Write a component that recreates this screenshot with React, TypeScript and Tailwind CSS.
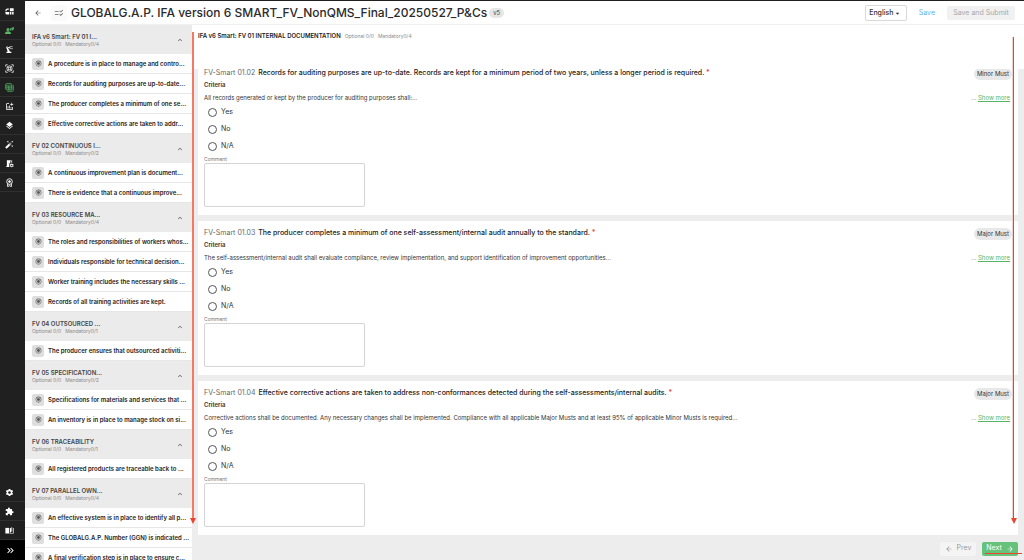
import { useState } from "react";
import clsx from "clsx";
import type { IconType } from "react-icons";
import {
  MdArrowBack,
  MdArrowDropDown,
  MdArrowForward,
  MdAutoFixHigh,
  MdChecklistRtl,
  MdExtension,
  MdKeyboardArrowUp,
  MdKeyboardDoubleArrowRight,
  MdLayers,
  MdOutlineAddchart,
  MdPrecisionManufacturing,
  MdRadioButtonChecked,
  MdRoomPreferences,
  MdSettings,
} from "react-icons/md";

function BlocksIcon({ className }: { className?: string }) {
  return (
    <svg viewBox="0 0 24 24" fill="currentColor" className={className}>
      <path d="M13 3h10v8H13zM13 13h4v7h-4zM19 13h4v7h-4z" />
      <path d="M10 3v4H7a3 3 0 0 0-3 3v1H1v-1a6 6 0 0 1 6-6h3zM1 13h10v7H5a4 4 0 0 1-4-4z" />
    </svg>
  );
}

function PeopleIcon({ className }: { className?: string }) {
  return (
    <svg viewBox="0 0 24 24" fill="currentColor" className={className}>
      <circle cx="8" cy="9" r="4" />
      <path d="M0 20c0-4 4-6 8-6s8 2 8 6v1H0zM14 5v8c2 0 3-1 4-3V5zM19 3h5c0 5-1 8-5 9z" />
    </svg>
  );
}

function ScanIcon({ className }: { className?: string }) {
  return (
    <svg
      viewBox="0 0 24 24"
      fill="none"
      stroke="currentColor"
      strokeWidth="2"
      className={className}
    >
      <path d="M2 7V2h5M17 2h5v5M22 17v5h-5M7 22H2v-5" />
      <circle cx="12" cy="12" r="7" />
      <circle cx="12" cy="12" r="3" />
      <path d="M6 8l4 2M14 14l4 2M14 10l3-3M10 14l-3 3" />
    </svg>
  );
}

function SheetsIcon({ className }: { className?: string }) {
  return (
    <svg
      viewBox="0 0 24 24"
      fill="none"
      stroke="currentColor"
      strokeWidth="2.2"
      className={className}
    >
      <rect x="2" y="2" width="16" height="16" rx="2" />
      <path d="M2 8h16M2 13h16M10 8v10M22 6v14a2 2 0 0 1-2 2H6" />
    </svg>
  );
}

function RosetteIcon({ className }: { className?: string }) {
  return (
    <svg
      viewBox="0 0 24 24"
      fill="none"
      stroke="currentColor"
      strokeWidth="2.4"
      className={className}
    >
      <circle cx="12" cy="9.500" r="7.500" />
      <circle cx="12" cy="9.500" r="2.500" fill="currentColor" />
      <path d="M7 15v8l5-2.500 5 2.500v-8" />
    </svg>
  );
}

function BookIcon({ className }: { className?: string }) {
  return (
    <svg viewBox="0 0 24 24" fill="currentColor" className={className}>
      <path d="M1 5h10v15H1z" />
      <path d="M13 6l3-1v11l-3 3zM17 4l2-2v12l-2 2zM21 5h2v15H12v-1.500h9z" />
    </svg>
  );
}

type RailItem = {
  label: string;
  icon: IconType | typeof BlocksIcon;
  active?: boolean;
};

const railTop: RailItem[] = [
  { label: "Dashboard", icon: BlocksIcon },
  { label: "Producers", icon: PeopleIcon, active: true },
  { label: "Production", icon: MdPrecisionManufacturing },
  { label: "Inspections", icon: ScanIcon },
  { label: "Checklists", icon: SheetsIcon, active: true },
  { label: "Reports", icon: MdOutlineAddchart },
  { label: "Layers", icon: MdLayers },
  { label: "Tools", icon: MdAutoFixHigh },
  { label: "Facilities", icon: MdRoomPreferences },
  { label: "Certificates", icon: RosetteIcon },
];

const railBottom: RailItem[] = [
  { label: "Settings", icon: MdSettings },
  { label: "Extensions", icon: MdExtension },
  { label: "Guides", icon: BookIcon },
];

const sections = [
  {
    title: "IFA v6 Smart: FV 01 I...",
    mandatory: 4,
    items: [
      "A procedure is in place to manage and contro...",
      "Records for auditing purposes are up-to-date...",
      "The producer completes a minimum of one se...",
      "Effective corrective actions are taken to addr...",
    ],
  },
  {
    title: "FV 02 CONTINUOUS I...",
    mandatory: 2,
    items: [
      "A continuous improvement plan is document...",
      "There is evidence that a continuous improve...",
    ],
  },
  {
    title: "FV 03 RESOURCE MA...",
    mandatory: 4,
    items: [
      "The roles and responsibilities of workers whos...",
      "Individuals responsible for technical decision...",
      "Worker training includes the necessary skills ...",
      "Records of all training activities are kept.",
    ],
  },
  {
    title: "FV 04 OUTSOURCED ...",
    mandatory: 1,
    items: ["The producer ensures that outsourced activiti..."],
  },
  {
    title: "FV 05 SPECIFICATION...",
    mandatory: 2,
    items: [
      "Specifications for materials and services that ...",
      "An inventory is in place to manage stock on si...",
    ],
  },
  {
    title: "FV 06 TRACEABILITY",
    mandatory: 1,
    items: ["All registered products are traceable back to ..."],
  },
  {
    title: "FV 07 PARALLEL OWN...",
    mandatory: 4,
    items: [
      "An effective system is in place to identify all p...",
      "The GLOBALG.A.P. Number (GGN) is indicated ...",
      "A final verification step is in place to ensure c...",
    ],
  },
];

const questions = [
  {
    id: "01.02",
    title:
      "Records for auditing purposes are up-to-date. Records are kept for a minimum period of two years, unless a longer period is required.",
    criteria:
      "All records generated or kept by the producer for auditing purposes shall:...",
    level: "Minor Must",
  },
  {
    id: "01.03",
    title:
      "The producer completes a minimum of one self-assessment/internal audit annually to the standard.",
    criteria:
      "The self-assessment/internal audit shall evaluate compliance, review implementation, and support identification of improvement opportunities...",
    level: "Major Must",
  },
  {
    id: "01.04",
    title:
      "Effective corrective actions are taken to address non-conformances detected during the self-assessments/internal audits.",
    criteria:
      "Corrective actions shall be documented. Any necessary changes shall be implemented. Compliance with all applicable Major Musts and at least 95% of applicable Minor Musts is required...",
    level: "Major Must",
  },
];

function RailButton({ item }: { item: RailItem }) {
  const Icon = item.icon;
  return (
    <button
      aria-label={item.label}
      className={clsx(
        "flex h-[19px] w-full items-center border-b border-[#303030] pl-[5px]",
        item.active ? "text-[#56b567]" : "text-white"
      )}
    >
      <Icon className="size-[9px]" />
    </button>
  );
}

function Rail() {
  return (
    <nav className="flex w-[25px] shrink-0 flex-col bg-[#202020] pt-px">
      {railTop.map((item) => (
        <RailButton key={item.label} item={item} />
      ))}
      <div className="flex-1" />
      {railBottom.map((item) => (
        <RailButton key={item.label} item={item} />
      ))}
      <button
        aria-label="Expand menu"
        className="flex h-[20px] items-center bg-black pl-[5px] text-white"
      >
        <MdKeyboardDoubleArrowRight className="size-[11px]" />
      </button>
    </nav>
  );
}

function Header() {
  return (
    <header className="flex h-6 shrink-0 items-center border-b border-[#f0f0f0] bg-white pt-px pr-[9px] pl-2">
      <button aria-label="Back" className="px-[1px] text-[#555]">
        <MdArrowBack className="size-[8px]" />
      </button>
      <button
        aria-label="Checklist"
        className="ml-[8px] flex size-4 items-center justify-center rounded-xs bg-[#fafafa] text-[#666]"
      >
        <MdChecklistRtl className="size-[10px]" />
      </button>
      <h1 className="ml-1 text-[12px] font-medium whitespace-nowrap text-[#2b2b2b]">
        GLOBALG.A.P. IFA version 6 SMART_FV_NonQMS_Final_20250527_P&amp;Cs
      </h1>
      <span className="ml-[2px] rounded-full bg-[#e6e6e6] px-1 text-[6px] leading-[10px] text-[#444]">
        v5
      </span>
      <div className="ml-auto flex items-center text-[7px]">
        <button className="flex h-4 w-[42px] items-center justify-center rounded-xs border border-[#d9d9d9] font-medium text-[#333]">
          English
          <MdArrowDropDown className="size-[9px]" />
        </button>
        <button className="ml-3 text-[#5db4ef]">Save</button>
        <button
          disabled
          className="ml-3 h-[14px] w-[68px] rounded-xs bg-[#f1f1f1] text-[#a8a8a8]"
        >
          Save and Submit
        </button>
      </div>
    </header>
  );
}

function Sidebar() {
  return (
    <aside className="relative z-10 w-[167px] shrink-0">
      <div className="h-full overflow-hidden">
        {sections.map((section) => (
          <section key={section.title}>
            <button className="flex h-[29px] w-full items-center justify-between bg-[#ebebeb] pr-2 pl-[7px] text-left">
              <span>
                <span className="block text-[6px] leading-[9px] font-semibold text-[#444]">
                  {section.title}
                </span>
                <span className="flex gap-1 text-[5px] leading-[7px] text-[#888]">
                  <span>Optional 0/0</span>
                  <span>Mandatory0/{section.mandatory}</span>
                </span>
              </span>
              <MdKeyboardArrowUp className="size-[8px] text-[#555]" />
            </button>
            <ul>
              {section.items.map((item) => (
                <li key={item}>
                  <a
                    href="#question"
                    className="flex h-5 items-center border-b border-[#e6e6e6] bg-white pl-[7px]"
                  >
                    <span className="flex size-3 shrink-0 items-center justify-center rounded-xs bg-[#dedede] text-[#555]">
                      <MdRadioButtonChecked className="size-[7px]" />
                    </span>
                    <span className="ml-1 text-[6px] font-semibold whitespace-nowrap text-[#222]">
                      {item}
                    </span>
                  </a>
                </li>
              ))}
            </ul>
          </section>
        ))}
      </div>
      <div className="absolute top-[7px] -right-[2px] bottom-[40px] flex w-[2px] flex-col items-center bg-[#f47a65]">
        <ArrowHead />
      </div>
    </aside>
  );
}

function ArrowHead() {
  return (
    <svg
      viewBox="0 0 6 6"
      className="absolute -bottom-1 size-[6px] fill-[#e8452c]"
    >
      <path d="M0 0h6L3 6z" />
    </svg>
  );
}

function QuestionCard({ question }: { question: (typeof questions)[number] }) {
  const [answer, setAnswer] = useState("");

  return (
    <article className="flex shrink-0 justify-between bg-white pt-[6px] pr-[6px] pb-2 pl-[6px]">
      <div className="min-w-0 text-[6px] whitespace-nowrap text-[#333]">
        <h3 className="flex gap-[3px] text-[7px] leading-[12px]">
          <span className="text-[#666]">FV-Smart {question.id}</span>
          <span className="font-medium text-[#222]">
            {question.title} <span className="text-[#e0402c]">*</span>
          </span>
        </h3>
        <p className="leading-[12px] font-semibold">Criteria</p>
        <p className="mt-px leading-[12px]">{question.criteria}</p>
        <fieldset className="text-[7px]">
          {["Yes", "No", "N/A"].map((option) => (
            <label
              key={option}
              className="flex h-[17px] items-center gap-1 pl-1"
            >
              <input
                type="radio"
                name={`answer-${question.id}`}
                checked={answer === option}
                onChange={() => setAnswer(option)}
                className="size-[9px] appearance-none rounded-full border border-[#555] checked:bg-[#56b567]"
              />
              {option}
            </label>
          ))}
        </fieldset>
        <label
          htmlFor={`comment-${question.id}`}
          className="block text-[5px] leading-[8px] text-[#777]"
        >
          Comment
        </label>
        <textarea
          id={`comment-${question.id}`}
          className="block h-11 w-[161px] resize-none rounded-xs border border-[#d4d4d4]"
        />
      </div>
      <div className="flex shrink-0 flex-col items-end pt-px">
        <span className="rounded-full bg-[#e8e8e8] px-[3px] text-[6px] leading-[12px] text-[#333]">
          {question.level}
        </span>
        <p className="mt-3 pr-[2px] text-[6px] leading-[12px] text-[#777]">
          ...{" "}
          <a href="#more" className="text-[#56b567] underline">
            Show more
          </a>
        </p>
      </div>
    </article>
  );
}

function App() {
  return (
    <div className="flex h-screen flex-col overflow-hidden bg-[#ededed] font-['Inter','Liberation_Sans',sans-serif]">
      <div className="h-px shrink-0 bg-[#202020]" />
      <div className="flex min-h-0 flex-1">
        <Rail />
        <div className="flex min-w-0 flex-1 flex-col">
          <Header />
          <div className="flex min-h-0 flex-1">
            <Sidebar />
            <main className="relative flex min-w-0 flex-1 flex-col">
              <div className="flex h-11 shrink-0 gap-1 bg-white pt-[5px] pl-[6px] leading-[12px]">
                <h2 className="text-[6px] font-semibold text-[#222]">
                  IFA v6 Smart: FV 01 INTERNAL DOCUMENTATION
                </h2>
                <span className="text-[5px] text-[#888]">Optional 0/0</span>
                <span className="text-[5px] text-[#888]">Mandatory0/4</span>
              </div>
              <div className="flex min-h-0 flex-1 flex-col justify-end gap-[6px] overflow-hidden pr-[6px] pl-[6px]">
                {questions.map((question) => (
                  <QuestionCard key={question.id} question={question} />
                ))}
              </div>
              <footer className="flex h-[25px] shrink-0 items-center justify-end gap-[6px] pt-[2px] pr-[6px] text-[7px]">
                <button
                  disabled
                  className="flex h-[14px] w-9 items-center justify-center gap-1 rounded-xs bg-[#f4f4f4] text-[#999]"
                >
                  <MdArrowBack className="size-[8px]" />
                  Prev
                </button>
                <button className="flex h-[14px] w-9 items-center justify-center gap-1 rounded-xs bg-[#66c17a] text-white">
                  Next
                  <MdArrowForward className="size-[8px]" />
                </button>
              </footer>
              <div className="absolute top-3 right-[10px] bottom-[40px] flex w-[2px] flex-col items-center border-l border-[#f6cfc9] bg-[#e8452c]">
                <ArrowHead />
              </div>
              <div className="absolute right-[2px] bottom-[6px] h-px w-[37px] bg-[#e8452c]" />
            </main>
          </div>
        </div>
      </div>
    </div>
  );
}

export default App;
